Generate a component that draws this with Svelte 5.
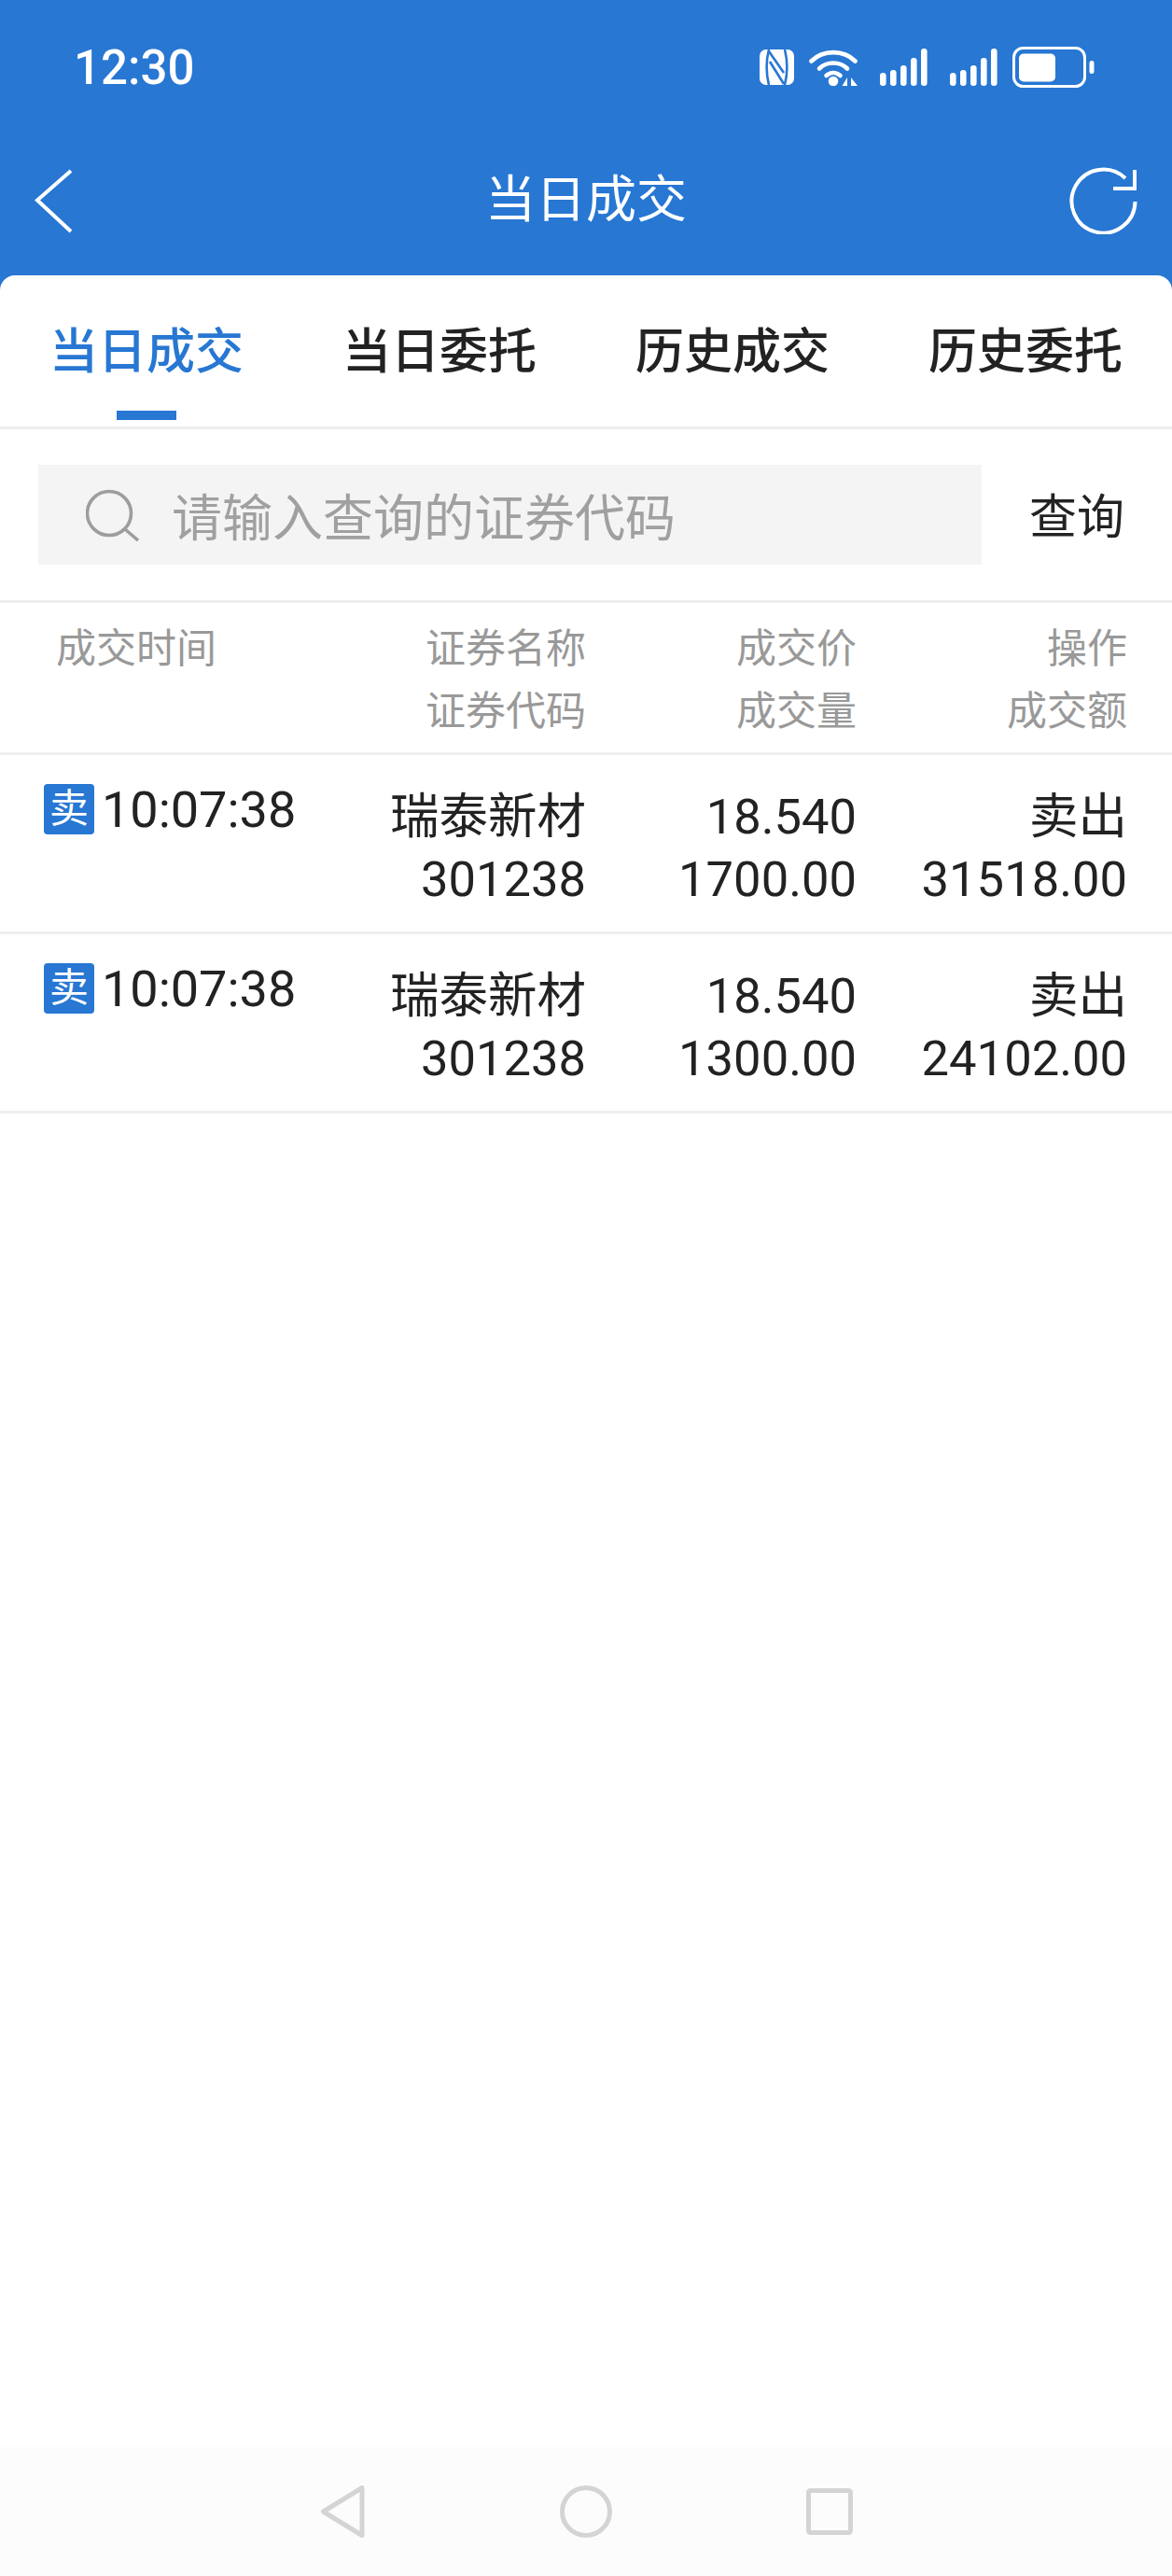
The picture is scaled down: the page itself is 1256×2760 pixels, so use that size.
<script>
  const tabs = ['当日成交', '当日委托', '历史成交', '历史委托'];
  const rows = [
    { time: '10:07:38', name: '瑞泰新材', code: '301238', price: '18.540', qty: '1700.00', op: '卖出', amount: '31518.00' },
    { time: '10:07:38', name: '瑞泰新材', code: '301238', price: '18.540', qty: '1300.00', op: '卖出', amount: '24102.00' }
  ];
  const bars = [14, 17, 22, 30, 40];
</script>

{#snippet signal()}
  <svg class="signal" viewBox="0 0 51 40" width="51" height="40">
    {#each bars as h, i}
      <rect x={i * 11} y={40 - h} width="6.6" height={h} rx="3.2" fill="#fff" />
    {/each}
  </svg>
{/snippet}

<div class="page">
  <div class="status">
    <span class="clock">12:30</span>
    <div class="status-icons">
      <svg class="nfc" viewBox="0 0 37 38" width="37" height="38">
        <rect width="37" height="38" rx="7" fill="#fff" />
        <g fill="none" stroke="#2777d3" stroke-width="2.6">
          <path d="M10 0C7 12 7 26 10 38" />
          <path d="M27 0C30 12 30 26 27 38" />
          <path d="M10 2L26 25" />
          <path d="M11 13L26 37" />
        </g>
      </svg>
      <svg class="wifi" viewBox="0 0 52 40" width="52" height="40">
        <g fill="none" stroke="#fff" stroke-width="4.6" stroke-linecap="round">
          <path d="M2.500 13.500C15 1 37 1 49.500 13.500" />
          <path d="M11 21.500C19 13.500 33 13.500 41 21.500" />
          <path d="M18.500 29C23 25 29 25 33.500 29" />
        </g>
        <circle cx="26" cy="35" r="5.300" fill="#fff" />
        <path d="M41 31V40H35.500Z" fill="#fff" />
        <path d="M45 31V40H52Z" fill="#fff" />
      </svg>
      {@render signal()}
      {@render signal()}
      <svg class="battery" viewBox="0 0 88 44" width="88" height="44">
        <rect x="1.500" y="1.500" width="76" height="41" rx="10" fill="none" stroke="#fff" stroke-width="3" />
        <rect x="7" y="7.500" width="39" height="30" rx="5" fill="#fff" />
        <rect x="82.500" y="15" width="5" height="14" rx="2.500" fill="#fff" />
      </svg>
    </div>
  </div>

  <div class="appbar">
    <svg class="back" viewBox="0 0 44 70" width="44" height="70">
      <path d="M40 3L4 34.500L40 68" fill="none" stroke="#fff" stroke-width="4" />
    </svg>
    <div class="title">当日成交</div>
    <svg class="refresh" viewBox="0 0 75 73" width="75" height="73">
      <path d="M71.500 38A34 34 0 1 1 61 13" fill="none" stroke="#fff" stroke-width="4" />
      <path d="M71 4V24H48" fill="none" stroke="#fff" stroke-width="4" />
    </svg>
  </div>

  <div class="card">
    <div class="tabs">
      {#each tabs as t, i}
        <div class="tab" class:active={i === 0}>{t}</div>
      {/each}
    </div>

    <div class="search">
      <div class="field">
        <svg viewBox="0 0 58 56" width="58" height="56">
          <circle cx="25" cy="26" r="23.500" fill="none" stroke="#9d9d9d" stroke-width="3.600" />
          <path d="M42 43L56 55" fill="none" stroke="#9d9d9d" stroke-width="3.600" />
        </svg>
        <span>请输入查询的证券代码</span>
      </div>
      <div class="go">查询</div>
    </div>

    <div class="head grid">
      <div class="c1">成交时间</div>
      <div>证券名称<br />证券代码</div>
      <div>成交价<br />成交量</div>
      <div>操作<br />成交额</div>
    </div>

    {#each rows as r}
      <div class="row grid">
        <div class="c1 when"><span class="badge">卖</span><span class="time">{r.time}</span></div>
        <div>{r.name}<br />{r.code}</div>
        <div>{r.price}<br />{r.qty}</div>
        <div>{r.op}<br />{r.amount}</div>
      </div>
    {/each}

    <div class="spacer"></div>

    <div class="nav">
      <svg viewBox="0 0 50 58" width="50" height="58">
        <path d="M45 3.500L3.500 29L45 54.500Z" fill="none" stroke="#d4d4d4" stroke-width="5" stroke-linejoin="round" />
      </svg>
      <svg viewBox="0 0 56 56" width="56" height="56">
        <circle cx="28" cy="28" r="25.500" fill="none" stroke="#d4d4d4" stroke-width="5" />
      </svg>
      <svg viewBox="0 0 50 50" width="50" height="50">
        <rect x="2.500" y="2.500" width="45" height="45" rx="2" fill="none" stroke="#d4d4d4" stroke-width="5" />
      </svg>
    </div>
  </div>
</div>

<style>
  :global(body) { margin: 0; }
  .page {
    width: 1256px;
    height: 2760px;
    display: flex;
    flex-direction: column;
    background: #2777d3;
    font-family: Roboto, "Noto Sans CJK SC", sans-serif;
    color: #222;
    overflow: hidden;
  }
  .status {
    height: 144px;
    flex: none;
    display: flex;
    align-items: center;
    justify-content: space-between;
    padding: 0 83px 0 79px;
    box-sizing: border-box;
  }
  .clock { color: #fff; font-size: 51px; line-height: 60px; font-weight: 500; padding-top: 2px; }
  .status-icons { display: flex; align-items: center; }
  .wifi { margin-left: 16px; }
  .signal { margin-left: 24px; }
  .battery { margin-left: 16px; }
  .appbar {
    height: 151px;
    flex: none;
    box-sizing: border-box;
    padding: 0 36px 10px 36px;
    display: grid;
    grid-template-columns: 1fr auto 1fr;
    align-items: center;
  }
  .refresh { justify-self: end; }
  .title { color: #fff; font-size: 54px; line-height: 70px; }
  .card {
    flex: 1;
    display: flex;
    flex-direction: column;
    background: #fff;
    border-radius: 16px 16px 0 0;
  }
  .tabs {
    height: 165px;
    box-sizing: border-box;
    flex: none;
    display: grid;
    grid-template-columns: repeat(4, 1fr);
    grid-template-rows: 162px;
    border-bottom: 3px solid #eee;
  }
  .tab {
    position: relative;
    text-align: center;
    font-size: 52px;
    font-weight: 500;
    line-height: 165px;
  }
  .tab.active { color: #2777d3; }
  .tab.active::after {
    content: "";
    position: absolute;
    left: 125px;
    bottom: 7px;
    width: 64px;
    height: 10px;
    background: #2777d3;
  }
  .search {
    height: 186px;
    flex: none;
    box-sizing: border-box;
    border-bottom: 3px solid #eee;
    display: flex;
    align-items: center;
    padding-left: 41px;
  }
  .field {
    width: 1011px;
    height: 107px;
    background: #f4f4f4;
    display: flex;
    align-items: center;
    padding-left: 51px;
    box-sizing: border-box;
    color: #a0a0a0;
    font-size: 54px;
  }
  .field span { margin-left: 34px; }
  .go { width: 204px; text-align: center; font-size: 51px; padding-bottom: 3px; }
  .grid {
    display: grid;
    grid-template-columns: 290px 338px 290px 290px;
    text-align: right;
    box-sizing: border-box;
    border-bottom: 3px solid #eee;
    flex: none;
  }
  .head {
    height: 163px;
    padding-top: 16px;
    color: #999;
    font-size: 43px;
    line-height: 67px;
  }
  .head .c1 { text-align: left; padding-left: 60px; }
  .row {
    height: 192px;
    padding-top: 33px;
    font-size: 52.500px;
    line-height: 67px;
  }
  .when {
    display: flex;
    align-items: flex-start;
    text-align: left;
    padding-left: 47px;
    margin-top: -4px;
    white-space: nowrap;
  }
  .time { margin-left: 8px; font-size: 54px; line-height: 60px; }
  .badge {
    width: 54px;
    height: 54px;
    border-radius: 4px;
    background: #2777d3;
    color: #fff;
    font-size: 42px;
    line-height: 54px;
    text-align: center;
    flex: none;
    margin-top: 2px;
  }
  .spacer { flex: 1; }
  .nav {
    height: 138px;
    flex: none;
    background: #fcfcfc;
    display: grid;
    grid-template-columns: 343px 50px 207px 56px 208px 50px;
    align-items: center;
  }
  .nav svg:nth-child(1) { grid-column: 2; }
  .nav svg:nth-child(2) { grid-column: 4; }
  .nav svg:nth-child(3) { grid-column: 6; }
</style>
